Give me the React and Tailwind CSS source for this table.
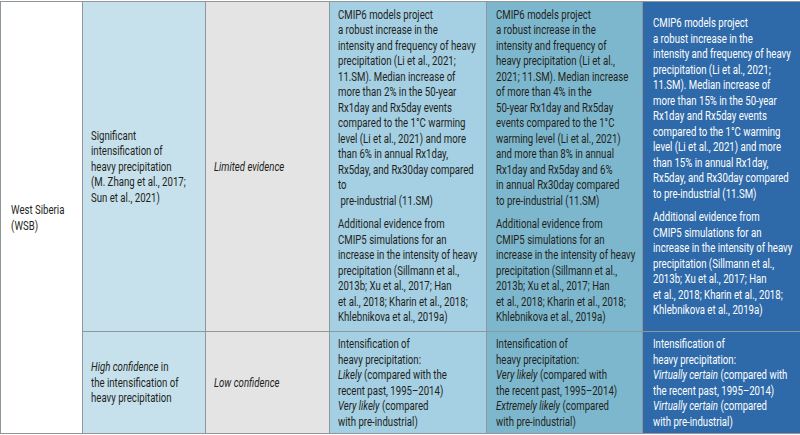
import React from "react";

// condensed look: Roboto squeezed horizontally, lines broken as in the print layout
function Squeeze({ children, className = "" }) {
  return (
    <div className={`origin-left scale-x-[0.77] w-[130%] whitespace-nowrap ${className}`}>
      {children}
    </div>
  );
}

function Lines({ lines }) {
  return (
    <div>
      {lines.map((l, i) => (
        <div key={i}>{l}</div>
      ))}
    </div>
  );
}

const additional = [
  "Additional evidence from",
  "CMIP5 simulations for an",
  "increase in the intensity of heavy",
  "precipitation (Sillmann et al.,",
  "2013b; Xu et al., 2017; Han",
  "et al., 2018; Kharin et al., 2018;",
  "Khlebnikova et al., 2019a)",
];

const col4 = [
  "CMIP6 models project",
  "a robust increase in the",
  "intensity and frequency of heavy",
  "precipitation (Li et al., 2021;",
  "11.SM). Median increase of",
  "more than 2% in the 50-year",
  "Rx1day and Rx5day events",
  "compared to the 1°C warming",
  "level (Li et al., 2021) and more",
  "than 6% in annual Rx1day,",
  "Rx5day, and Rx30day compared",
  "to",
  "\u00a0pre-industrial (11.SM)",
];

const col5 = [
  "CMIP6 models project",
  "a robust increase in the",
  "intensity and frequency of",
  "heavy precipitation (Li et al.,",
  "2021; 11.SM). Median increase",
  "of more than 4% in the",
  "50-year Rx1day and Rx5day",
  "events compared to the 1°C",
  "warming level (Li et al., 2021)",
  "and more than 8% in annual",
  "Rx1day and Rx5day and 6%",
  "in annual Rx30day compared",
  "to pre-industrial (11.SM)",
];

const col6 = [
  "CMIP6 models project",
  "a robust increase in the",
  "intensity and frequency of heavy",
  "precipitation (Li et al., 2021;",
  "11.SM). Median increase of",
  "more than 15% in the 50-year",
  "Rx1day and Rx5day events",
  "compared to the 1°C warming",
  "level (Li et al., 2021) and more",
  "than 15% in annual Rx1day,",
  "Rx5day, and Rx30day compared",
  "to pre-industrial (11.SM)",
];

export default function App() {
  const cell = "border border-[#8d979d] align-middle px-[8px] py-0 overflow-hidden";
  return (
    <div
      className="w-[800px] h-[435px] bg-white overflow-hidden text-[12.5px] leading-[15.5px]"
      style={{ fontFamily: 'Roboto, "Liberation Sans", sans-serif' }}
    >
      <table className="table-fixed border-collapse w-[800px] mt-px text-[#231f20]">
        <colgroup>
          <col className="w-[82px]" />
          <col className="w-[123px]" />
          <col className="w-[124px]" />
          <col className="w-[157px]" />
          <col className="w-[156px]" />
          <col className="w-[158px]" />
        </colgroup>
        <tbody>
          <tr className="h-[330px]">
            <td rowSpan={2} className={`${cell} bg-white pl-[10px]`}>
              <Squeeze>
                <Lines lines={["West Siberia", "(WSB)"]} />
              </Squeeze>
            </td>
            <td className={`${cell} bg-[#c6e1ec]`}>
              <Squeeze>
                <Lines
                  lines={[
                    "Significant",
                    "intensification of",
                    "heavy precipitation",
                    "(M. Zhang et al., 2017;",
                    "Sun et al., 2021)",
                  ]}
                />
              </Squeeze>
            </td>
            <td className={`${cell} bg-[#e4e4e4]`}>
              <Squeeze className="italic">Limited evidence</Squeeze>
            </td>
            <td className={`${cell} bg-[#a5cfe3]`}>
              <Squeeze className="-mt-[2px]">
                <Lines lines={col4} />
                <div className="mt-[8px]">
                  <Lines lines={additional} />
                </div>
              </Squeeze>
            </td>
            <td className={`${cell} bg-[#7db7cd] pl-[9px]`}>
              <Squeeze className="-mt-[2px]">
                <Lines lines={col5} />
                <div className="mt-[8px]">
                  <Lines lines={additional} />
                </div>
              </Squeeze>
            </td>
            <td className={`${cell} bg-[#2e6aa9] text-white pl-[10px]`}>
              <Squeeze>
                <Lines lines={col6} />
                <div className="mt-[8px]">
                  <Lines lines={additional} />
                </div>
              </Squeeze>
            </td>
          </tr>
          <tr className="h-[102px]">
            <td className={`${cell} bg-[#c6e1ec]`}>
              <Squeeze>
                <div><span className="italic">High confidence</span> in</div>
                <div>the intensification of</div>
                <div>heavy precipitation</div>
              </Squeeze>
            </td>
            <td className={`${cell} bg-[#e4e4e4]`}>
              <Squeeze className="italic">Low confidence</Squeeze>
            </td>
            <td className={`${cell} bg-[#a5cfe3]`}>
              <Squeeze>
                <div>Intensification of</div>
                <div>heavy precipitation:</div>
                <div><span className="italic">Likely</span> (compared with the</div>
                <div>recent past, 1995–2014)</div>
                <div><span className="italic">Very likely</span> (compared</div>
                <div>with pre-industrial)</div>
              </Squeeze>
            </td>
            <td className={`${cell} bg-[#7db7cd] pl-[9px]`}>
              <Squeeze>
                <div>Intensification of</div>
                <div>heavy precipitation:</div>
                <div><span className="italic">Very likely</span> (compared with</div>
                <div>the recent past, 1995–2014)</div>
                <div><span className="italic">Extremely likely</span> (compared</div>
                <div>with pre-industrial)</div>
              </Squeeze>
            </td>
            <td className={`${cell} bg-[#2e6aa9] text-white pl-[10px]`}>
              <Squeeze>
                <div>Intensification of</div>
                <div>heavy precipitation:</div>
                <div><span className="italic">Virtually certain</span> (compared with</div>
                <div>the recent past, 1995–2014)</div>
                <div><span className="italic">Virtually certain</span> (compared</div>
                <div>with pre-industrial)</div>
              </Squeeze>
            </td>
          </tr>
        </tbody>
      </table>
    </div>
  );
}
